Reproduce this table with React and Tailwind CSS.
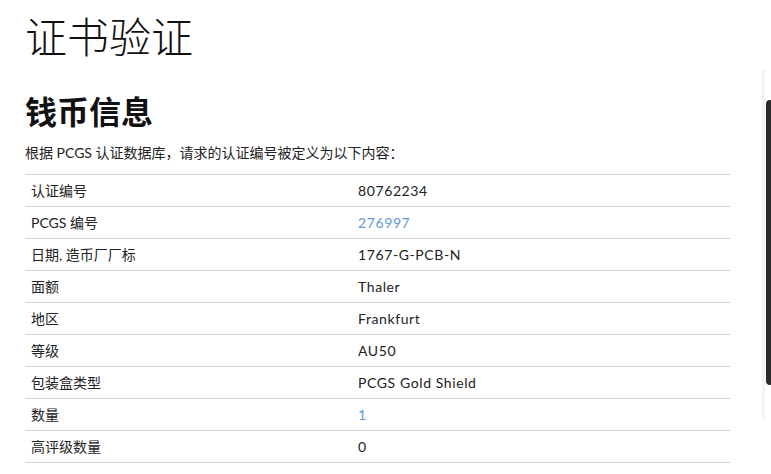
import React from 'react';

const rows = [
  { label: '认证编号', value: '80762234' },
  { label: 'PCGS 编号', value: '276997', link: true },
  { label: '日期, 造币厂厂标', value: '1767-G-PCB-N' },
  { label: '面额', value: 'Thaler' },
  { label: '地区', value: 'Frankfurt' },
  { label: '等级', value: 'AU50' },
  { label: '包装盒类型', value: 'PCGS Gold Shield' },
  { label: '数量', value: '1', link: true },
  { label: '高评级数量', value: '0' },
];

const font = { fontFamily: 'Lato, "Noto Sans CJK SC", sans-serif' };

export default function App() {
  return (
    <div className="relative w-[771px] h-[474px] overflow-hidden bg-white text-[#222]" style={font}>
      <div className="pl-[25px] pr-[41px] pt-[12px]">
        <h1 className="text-[42px] leading-[50px] font-light text-[#111]">证书验证</h1>
        <h2 className="mt-[30px] text-[32px] leading-[40px] font-bold text-[#111]">钱币信息</h2>
        <p className="mt-[11px] text-[14px] leading-[20px]">
          根据 PCGS 认证数据库，请求的认证编号被定义为以下内容：
        </p>
        <table className="mt-[11px] w-[705px] border-collapse text-[14px]">
          <tbody>
            {rows.map((r) => (
              <tr key={r.label} className="border-t border-[#d4d4d4]">
                <td className="w-[327px] h-[32px] px-[6px] pb-[1px] align-middle">{r.label}</td>
                <td className="h-[32px] px-[6px] pb-[1px] align-middle tracking-[0.6px]">
                  {r.link ? <span className="text-[#5f98d8]">{r.value}</span> : r.value}
                </td>
              </tr>
            ))}
            <tr className="border-t border-[#d4d4d4]"><td colSpan={2} className="h-0 p-0"></td></tr>
          </tbody>
        </table>
      </div>
      <div className="absolute right-[6px] top-[70px] h-[350px] w-[3px] bg-[#f3f3f3]" />
      <div className="absolute right-0 top-[100px] h-[285px] w-[5px] rounded-l-[4px] bg-[#2a2a2a]" />
    </div>
  );
}
